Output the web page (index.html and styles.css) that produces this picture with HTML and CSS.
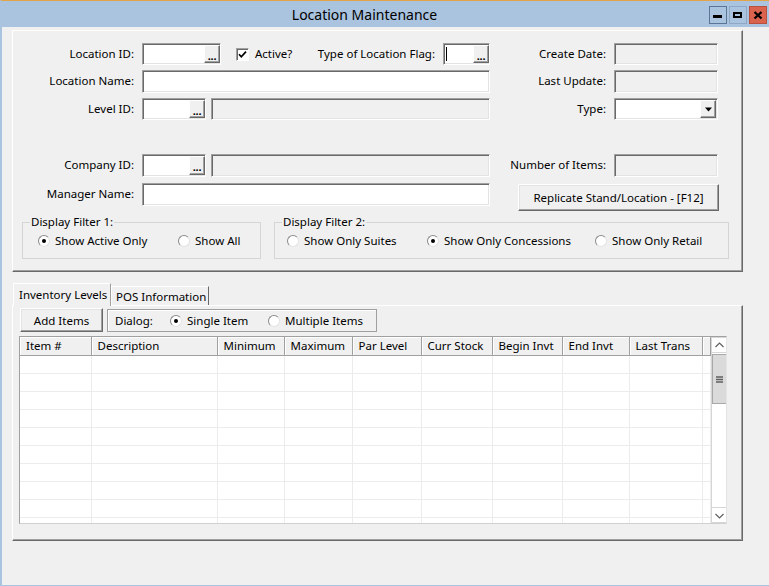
FILE: index.html
```html
<!DOCTYPE html>
<html>
<head>
<meta charset="utf-8">
<title>Location Maintenance</title>
<link rel="stylesheet" href="styles.css">
</head>
<body>
<div class="window">
  <header class="titlebar">
    <div class="title">Location Maintenance</div>
    <div class="wbtns">
      <span class="wbtn wmin"><svg width="16" height="16" viewBox="0 0 16 16"><rect x="3" y="8" width="9" height="3" fill="#000"/></svg></span>
      <span class="wbtn wmax"><svg width="16" height="16" viewBox="0 0 16 16"><rect x="3" y="5" width="9" height="6" fill="#000"/><rect x="5" y="7" width="5" height="2" fill="#aac3de"/></svg></span>
      <span class="wbtn wclose"><svg width="16" height="16" viewBox="0 0 16 16"><path d="M4.5 5 L11.5 11.5 M11.5 5 L4.5 11.5" stroke="#000" stroke-width="2.3"/></svg></span>
    </div>
  </header>

  <main class="client">
    <section class="panel top-panel">
      <div class="form">
        <label class="lbl">Location ID:</label>
        <div class="ctl">
          <div class="inp lookup w-id"><span class="dots">...</span></div>
          <span class="chk"><svg width="11" height="11" viewBox="0 0 11 11"><path d="M2 5.2 L4.3 7.8 L9 2.6" fill="none" stroke="#000" stroke-width="1.7"/></svg></span>
          <span class="chk-text">Active?</span>
          <span class="flag-lbl">Type of Location Flag:</span>
          <div class="inp lookup w-flag"><span class="caret"></span><span class="dots">...</span></div>
        </div>
        <label class="lbl">Create Date:</label>
        <div class="inp dis h22"></div>

        <label class="lbl">Location Name:</label>
        <div class="ctl"><div class="inp full h23"></div></div>
        <label class="lbl">Last Update:</label>
        <div class="inp dis h23"></div>

        <label class="lbl">Level ID:</label>
        <div class="ctl">
          <div class="inp lookup w-short"><span class="dots">...</span></div>
          <div class="inp dis grow"></div>
        </div>
        <label class="lbl">Type:</label>
        <div class="inp select h22"><span class="ddbtn"><svg width="9" height="5" viewBox="0 0 9 5"><path d="M1 0.5 H8 L4.5 4.5 Z" fill="#000"/></svg></span></div>

        <label class="lbl">Company ID:</label>
        <div class="ctl">
          <div class="inp lookup w-short h23"><span class="dots">...</span></div>
          <div class="inp dis grow h23"></div>
        </div>
        <label class="lbl">Number of Items:</label>
        <div class="inp dis h23"></div>

        <label class="lbl">Manager Name:</label>
        <div class="ctl"><div class="inp full h23"></div></div>
        <button class="btn replicate">Replicate Stand/Location - [F12]</button>
      </div>

      <div class="filters">
        <fieldset class="group g1">
          <legend>Display Filter 1:</legend>
          <div class="opts">
            <span class="opt o-active"><span class="radio on"></span>Show Active Only</span>
            <span class="opt"><span class="radio"></span>Show All</span>
          </div>
        </fieldset>
        <fieldset class="group g2">
          <legend>Display Filter 2:</legend>
          <div class="opts">
            <span class="opt o-suites"><span class="radio"></span>Show Only Suites</span>
            <span class="opt o-conc"><span class="radio on"></span>Show Only Concessions</span>
            <span class="opt"><span class="radio"></span>Show Only Retail</span>
          </div>
        </fieldset>
      </div>
    </section>

    <nav class="tabs">
      <span class="tab active">Inventory Levels</span>
      <span class="tab">POS Information</span>
    </nav>

    <section class="panel tab-panel">
      <div class="toolbar">
        <button class="btn add">Add Items</button>
        <div class="dialog">
          <span class="dlg-lbl">Dialog:</span>
          <span class="opt o-single"><span class="radio on"></span>Single Item</span>
          <span class="opt"><span class="radio"></span>Multiple Items</span>
        </div>
      </div>

      <div class="grid">
        <table class="items">
          <colgroup>
            <col class="c1"><col class="c2"><col class="c3"><col class="c4"><col class="c5"><col class="c6"><col class="c7"><col class="c8"><col class="c9"><col class="c10">
          </colgroup>
          <thead>
            <tr><th>Item #</th><th>Description</th><th>Minimum</th><th>Maximum</th><th>Par Level</th><th>Curr Stock</th><th>Begin Invt</th><th>End Invt</th><th>Last Trans</th><th></th></tr>
          </thead>
          <tbody>
            <tr><td></td><td></td><td></td><td></td><td></td><td></td><td></td><td></td><td></td><td></td></tr>
            <tr><td></td><td></td><td></td><td></td><td></td><td></td><td></td><td></td><td></td><td></td></tr>
            <tr><td></td><td></td><td></td><td></td><td></td><td></td><td></td><td></td><td></td><td></td></tr>
            <tr><td></td><td></td><td></td><td></td><td></td><td></td><td></td><td></td><td></td><td></td></tr>
            <tr><td></td><td></td><td></td><td></td><td></td><td></td><td></td><td></td><td></td><td></td></tr>
            <tr><td></td><td></td><td></td><td></td><td></td><td></td><td></td><td></td><td></td><td></td></tr>
            <tr><td></td><td></td><td></td><td></td><td></td><td></td><td></td><td></td><td></td><td></td></tr>
            <tr><td></td><td></td><td></td><td></td><td></td><td></td><td></td><td></td><td></td><td></td></tr>
            <tr><td></td><td></td><td></td><td></td><td></td><td></td><td></td><td></td><td></td><td></td></tr>
            <tr><td></td><td></td><td></td><td></td><td></td><td></td><td></td><td></td><td></td><td></td></tr>
          </tbody>
        </table>
        <div class="vscroll">
          <span class="sbtn"><svg width="15" height="15" viewBox="0 0 15 15"><path d="M3.5 9 L7.5 5 L11.5 9" fill="none" stroke="#606060" stroke-width="1.2"/></svg></span>
          <span class="thumb"><svg width="9" height="9" viewBox="0 0 9 9"><path d="M1 2 H8 M1 4.5 H8 M1 7 H8" stroke="#606060" stroke-width="1.3"/></svg></span>
          <span class="track"></span>
          <span class="sbtn"><svg width="15" height="15" viewBox="0 0 15 15"><path d="M3.5 6 L7.5 10 L11.5 6" fill="none" stroke="#606060" stroke-width="1.2"/></svg></span>
        </div>
      </div>
    </section>
  </main>
</div>
</body>
</html>
```

FILE: styles.css
```css
html, body {
  margin: 0;
  padding: 0;
}
body {
  background: #f0f0f0;
  font-family: "Noto Sans", "Open Sans", sans-serif;
  font-size: 11.5px;
  color: #000;
}
.window {
  width: 769px;
  height: 586px;
  box-sizing: border-box;
  border-top: 1px solid #e2a447;
  border-left: 2px solid #aac3de;
  border-bottom: 1px solid #aac3de;
  background: #f0f0f0;
  display: flex;
  flex-direction: column;
  overflow: hidden;
}
.titlebar {
  height: 26px;
  flex: none;
  background: #aac3de;
  display: flex;
  align-items: flex-start;
}
.title {
  flex: 1;
  text-align: center;
  font-size: 14px;
  line-height: 28px;
  padding-left: 20px;
  color: #000;
}
.wbtns {
  display: flex;
  gap: 2px;
  margin: 5px 2px 0 2px;
}
.wbtn {
  width: 18px;
  height: 18px;
  box-sizing: border-box;
  border: 1px solid #5b7594;
  display: flex;
}
.wmax { border-color: #8ea8c6; }
.wclose { background: #d9634d; border-color: #b8503e; }

.client {
  flex: 1;
  padding: 3px 0 0 10px;
}

/* raised panel */
.panel {
  box-sizing: border-box;
  width: 731px;
  background: #f0f0f0;
  border-top: 1px solid #fff;
  border-left: 1px solid #fff;
  border-right: 1px solid #696969;
  border-bottom: 1px solid #696969;
  box-shadow: inset -1px -1px 0 #a0a0a0;
}
.top-panel {
  height: 242px;
  padding-top: 12px;
}

.form {
  display: grid;
  grid-template-columns: 129px 348px 124px 104px;
  grid-template-rows: 22px 23px 51px 24px 28px;
  row-gap: 5px;
  align-items: start;
}
.lbl {
  text-align: right;
  padding-right: 8px;
  line-height: 22px;
  white-space: nowrap;
}
.ctl {
  display: flex;
  align-items: flex-start;
}

/* sunken inputs */
.inp {
  box-sizing: border-box;
  height: 22px;
  background: #fff;
  border: 1px solid;
  border-color: #a0a0a0 #fff #fff #a0a0a0;
  box-shadow: inset 1px 1px 0 #696969, inset -1px -1px 0 #e3e3e3;
}
.h22 { height: 22px; }
.h23 { height: 23px; }
.dis { background: #f0f0f0; }
.full { width: 348px; }
.grow { flex: 1; margin-left: 5px; }
.lookup {
  display: flex;
  align-items: stretch;
  justify-content: flex-end;
  padding: 1px 0 1px 0;
}
.w-id { width: 79px; }
.w-short { width: 64px; }
.w-flag { width: 47px; justify-content: space-between; }
.dots {
  width: 16px;
  box-sizing: border-box;
  background: #f0f0f0;
  border-top: 1px solid #fff;
  border-left: 1px solid #fff;
  border-right: 1px solid #696969;
  border-bottom: 1px solid #696969;
  box-shadow: inset -1px -1px 0 #a0a0a0;
  text-align: center;
  font-size: 11px;
  font-weight: bold;
  line-height: 19px;
  letter-spacing: -0.3px;
  overflow: hidden;
}
.caret {
  width: 1px;
  margin: 2px 0 2px 2px;
  background: #000;
}
.chk {
  width: 13px;
  height: 13px;
  box-sizing: border-box;
  margin: 5px 0 0 15px;
  background: #fff;
  border: 1px solid;
  border-color: #a0a0a0 #fff #fff #a0a0a0;
  box-shadow: inset 1px 1px 0 #696969;
  display: flex;
}
.chk-text {
  margin-left: 6px;
  line-height: 22px;
}
.flag-lbl {
  margin-left: auto;
  margin-right: 8px;
  line-height: 22px;
}

.select {
  display: flex;
  justify-content: flex-end;
  padding: 1px 1px 1px 0;
}
.ddbtn {
  width: 16px;
  box-sizing: border-box;
  background: #f0f0f0;
  border-top: 1px solid #fff;
  border-left: 1px solid #fff;
  border-right: 1px solid #696969;
  border-bottom: 1px solid #696969;
  box-shadow: inset -1px -1px 0 #a0a0a0;
  display: flex;
  align-items: center;
  justify-content: center;
}

/* raised buttons */
.btn {
  font: inherit;
  color: #000;
  background: #f0f0f0;
  border-top: 1px solid #fff;
  border-left: 1px solid #fff;
  border-right: 1px solid #696969;
  border-bottom: 1px solid #696969;
  box-shadow: inset -1px -1px 0 #a0a0a0, inset 1px 1px 0 #e3e3e3;
  padding: 0;
  margin: 0;
}
.replicate {
  grid-column: 3 / 5;
  justify-self: end;
  width: 201px;
  height: 27px;
  margin-top: 1px;
  margin-right: -1px;
}

/* group boxes */
.filters {
  display: flex;
  gap: 13px;
  margin: 4px 0 0 9px;
}
.group {
  margin: 0;
  padding: 5px 0 10px 7px;
  border: 1px solid #d5d5d5;
  min-width: 0;
  box-sizing: border-box;
}
.g1 { width: 239px; }
.g2 { width: 455px; }
.group legend {
  padding: 0 1px;
  line-height: 14px;
}
.opts {
  display: flex;
  line-height: 14px;
}
.g1 .opts { padding-left: 8px; }
.g2 .opts { padding-left: 5px; }
.opt {
  display: inline-flex;
  align-items: center;
  white-space: nowrap;
}
.o-active { width: 140px; }
.o-suites { width: 140px; }
.o-conc { width: 168px; }
.radio {
  width: 12px;
  height: 12px;
  box-sizing: border-box;
  border-radius: 50%;
  background: #fff;
  border: 1px solid;
  border-color: #8a8a8a #e3e3e3 #e3e3e3 #8a8a8a;
  margin-right: 5px;
  display: flex;
  align-items: center;
  justify-content: center;
}
.radio.on::after {
  content: "";
  width: 4px;
  height: 4px;
  border-radius: 50%;
  background: #000;
}

/* tabs */
.tabs {
  display: flex;
  align-items: flex-end;
  height: 22px;
  margin: 11px 0 0 1px;
}
.tab {
  box-sizing: border-box;
  height: 19px;
  width: 98px;
  padding-left: 4px;
  line-height: 19px;
  border-top: 1px solid #fff;
  border-left: 1px solid #fff;
  border-right: 1px solid #696969;
  background: #f0f0f0;
  white-space: nowrap;
}
.tab.active {
  height: 23px;
  width: 98px;
  margin-bottom: -1px;
  padding-left: 5px;
  line-height: 21px;
  position: relative;
  z-index: 1;
  border-right-color: #a0a0a0;
}
.tab-panel {
  height: 236px;
  padding: 2px 0 0 7px;
}
.toolbar {
  display: flex;
  align-items: flex-start;
  gap: 4px;
}
.add {
  width: 83px;
  height: 24px;
}
.dialog {
  box-sizing: border-box;
  width: 270px;
  height: 23px;
  margin-top: 1px;
  border: 1px solid #a0a0a0;
  box-shadow: inset 1px 1px 0 #fff;
  display: flex;
  align-items: center;
  padding-left: 7px;
}
.dlg-lbl { width: 55px; }
.o-single { width: 98px; }

/* data grid */
.grid {
  margin: 4px 0 0 -1px;
  width: 708px;
  height: 188px;
  box-sizing: border-box;
  border-top: 1px solid #a0a0a0;
  border-left: 1px solid #a0a0a0;
  border-right: 1px solid #e3e3e3;
  border-bottom: 1px solid #d0d0d0;
  display: flex;
  overflow: hidden;
  background: #fff;
}
.items {
  width: 690px;
  flex: none;
  table-layout: fixed;
  border-collapse: collapse;
  align-self: flex-start;
}
.c1 { width: 71px; }
.c2 { width: 126px; }
.c3 { width: 67px; }
.c4 { width: 68px; }
.c5 { width: 69px; }
.c6 { width: 71px; }
.c7 { width: 70px; }
.c8 { width: 67px; }
.c9 { width: 73px; }
.c10 { width: 8px; }
.items th {
  height: 18px;
  padding: 0 0 0 6px;
  text-align: left;
  font-weight: normal;
  background: #f0f0f0;
  border-right: 1px solid #a0a0a0;
  border-bottom: 1px solid #a0a0a0;
  box-shadow: inset 1px 1px 0 #fff;
  white-space: nowrap;
  overflow: hidden;
  line-height: 18px;
}
.items td {
  height: 17px;
  padding: 0;
  border-right: 1px solid #ececec;
  border-bottom: 1px solid #ececec;
}
.vscroll {
  width: 16px;
  flex: none;
  display: flex;
  flex-direction: column;
  background: #fff;
  border-left: 1px solid #d6d6d6;
}
.sbtn {
  height: 16px;
  box-sizing: border-box;
  border: 1px solid #d6d6d6;
  border-left: 0;
  display: flex;
  align-items: center;
  justify-content: center;
  background: #fff;
}
.thumb {
  height: 50px;
  margin-top: 1px;
  box-sizing: border-box;
  background: #dadada;
  border: 1px solid #a8a8a8;
  display: flex;
  align-items: center;
  justify-content: center;
}
.track { flex: 1; }
```
